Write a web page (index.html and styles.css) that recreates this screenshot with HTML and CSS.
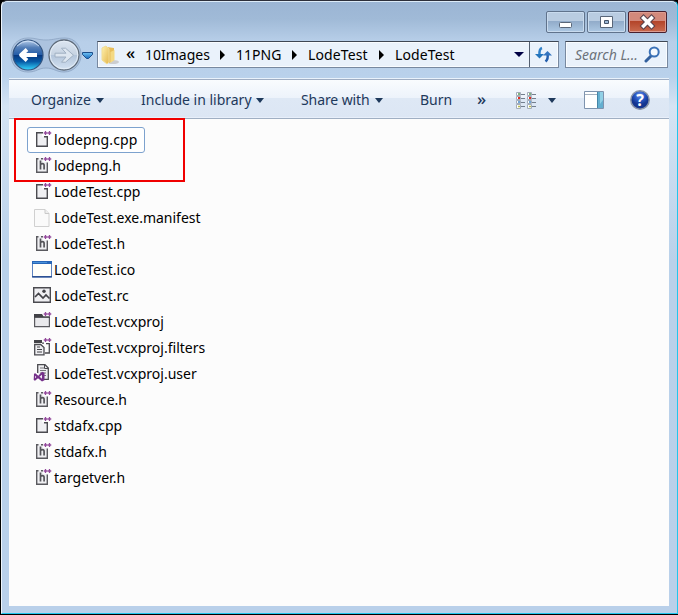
FILE: index.html
```html
<!DOCTYPE html>
<html lang="en">
<head>
<meta charset="utf-8">
<title>LodeTest</title>
<link rel="stylesheet" href="styles.css">
</head>
<body>
<svg class="defs" width="0" height="0" aria-hidden="true">
  <defs>
    <symbol id="plus" viewBox="0 0 8 4"><path d="M0 2h4M2 0v4M4.200 2h3.800M6 0v4" fill="none" stroke="#93499b" stroke-width="1.300"/></symbol>
    <symbol id="cpp" viewBox="0 0 20 20">
      <path d="M4.700 2.700H10V6.500H15.300V16.300H4.700Z" fill="#efeff2"/>
      <path d="M11 2.700H4.700V16.300H15.300V6.700H12" fill="none" stroke="#4b4b50" stroke-width="1.400"/>
      <use href="#plus" x="11.500" y="1" width="8" height="4"/>
    </symbol>
    <symbol id="h" viewBox="0 0 20 20">
      <path d="M4 2h7v4h5v11H4Z" fill="#efeff2"/>
      <path d="M6.500 2.700H4.700V16.300H15.300V6.500M9 2.700h2" fill="none" stroke="#5a5a5f" stroke-width="1.400"/>
      <path d="M8.500 4.500v9M8.500 8.500q.8-.9 2-.9 1.600 0 1.600 2v3.900" fill="none" stroke="#55555a" stroke-width="1.700"/>
      <use href="#plus" x="11.500" y="1" width="8" height="4"/>
    </symbol>
    <symbol id="blank" viewBox="0 0 20 20">
      <path d="M2.500 1.500H13l4 4V18.500H2.500Z" fill="#fafafa" stroke="#d0d0d0"/>
      <path d="M13 1.500V5.500h4" fill="#eee" stroke="#c9c9c9"/>
    </symbol>
    <symbol id="ico" viewBox="0 0 20 20">
      <path d="M.5 2h19v15H.5Z" fill="#fffffa" stroke="#5d83c0"/>
      <path d="M0 1h20v3H0Z" fill="#2867b8"/><path d="M1 2h14v1H1Z" fill="#4b93da"/><path d="M0 16h20v1.500H0Z" fill="#2d5193"/>
    </symbol>
    <symbol id="rc" viewBox="0 0 20 20">
      <path d="M1.700 1.700h16.600v14.600H1.700Z" fill="#efeff2" stroke="#4b4b50" stroke-width="1.400"/>
      <path d="M3 11l3.500-3.500 4.500 4.500 3-3 3.500 3.500" fill="none" stroke="#424247" stroke-width="1.700"/><circle cx="12" cy="5.200" r="1.700" fill="#424247"/>
    </symbol>
    <symbol id="proj" viewBox="0 0 20 20">
      <path d="M2.600 5h14.800v9.700H2.600Z" fill="#e9e9ec" stroke="#5a5a5f" stroke-width="1.200"/>
      <path d="M2 2h8L11.500 4.500h6.500v1.300H2Z" fill="#424247"/><use href="#plus" x="11.500" y="0" width="8" height="4"/>
    </symbol>
    <symbol id="filters" viewBox="0 0 20 20">
      <path d="M2 2h8v3H2Z" fill="#424247"/><path d="M10 5.200h2M14 5.700h3.300V15H13" fill="none" stroke="#4b4b50" stroke-width="1.300"/>
      <path d="M2.700 6.500h6l3.300 3V16.800H2.700Z" fill="#efeff2" stroke="#4b4b50" stroke-width="1.300"/>
      <path d="M5 9h3M5 11.500h5M5 14h5" stroke="#424247"/><use href="#plus" x="11.500" y="0" width="8" height="4"/>
    </symbol>
    <symbol id="user" viewBox="0 0 20 20">
      <path d="M5.700 9V.700H13L16.300 4V15.300H10" fill="#efeff2" stroke="#4b4b50" stroke-width="1.300"/>
      <path d="M8 4h4M8 6.500h6M8 9h6M12 11.500h2" stroke="#77777b"/><path d="M12.500 .5V4.500h4" fill="none" stroke="#4b4b50"/>
      <path d="M2 9.800L3.300 9.300l3 2.500L10 7.800l2.500 1V16.300l-2.500 1.200L6 14.300l-3 2.500-1.300-.7Z" fill="#75308a"/><path d="M3 11.800v2.500l1.300-1.300ZM10 10.800v4l-2.500-2Z" fill="#f1e9f5"/>
    </symbol>
    <linearGradient id="orb" x2="0" y2="1"><stop stop-color="#b9d0ed"/><stop offset=".25" stop-color="#547fb8"/><stop offset=".49" stop-color="#245ca7"/><stop offset=".5" stop-color="#07357d"/><stop offset=".72" stop-color="#075aa6"/><stop offset="1" stop-color="#36d9ff"/></linearGradient>
    <linearGradient id="dull" x2="0" y2="1"><stop stop-color="#dce6f1"/><stop offset=".49" stop-color="#c6d3e2"/><stop offset=".5" stop-color="#b2c4da"/><stop offset="1" stop-color="#d5e3f2"/></linearGradient>
    <linearGradient id="blue" x2="0" y2="1"><stop stop-color="#74c6f6"/><stop offset="1" stop-color="#1668ba"/></linearGradient>
    <linearGradient id="gold" x2="1" y2="1"><stop stop-color="#fff1ac"/><stop offset="1" stop-color="#e3b64f"/></linearGradient>
    <radialGradient id="help" cy=".25"><stop stop-color="#6c91e4"/><stop offset=".55" stop-color="#2858c4"/><stop offset="1" stop-color="#14358f"/></radialGradient>
  </defs>
</svg>
<div class="window">
  <header class="titlebar">
    <button class="ctl" aria-label="Minimize"><svg width="39" height="22"><rect x="13.500" y="11.500" width="12" height="5" rx="1" fill="#fff" stroke="#596678"/></svg></button>
    <button class="ctl" aria-label="Maximize"><svg width="39" height="22"><path d="M13.500 5.500h12v11h-12Z" fill="#fff" stroke="#596678"/><path d="M17.500 9.500h4v3h-4Z" fill="#9db9d6" stroke="#465469"/></svg></button>
    <button class="ctl close" aria-label="Close"><svg width="39" height="22"><path d="M15.500 7l8 8M23.500 7l-8 8" stroke="#57414b" stroke-width="5.500" stroke-linecap="square"/><path d="M15.500 7l8 8M23.500 7l-8 8" stroke="#fff" stroke-width="3.500" stroke-linecap="square"/></svg></button>
  </header>
  <nav class="navrow">
    <svg class="orbs" width="87" height="37" viewBox="0 0 87 37">
      <path d="M19 2C27 2 29 4 37 4S47 2 56 2C66 2 72 10 72 19S65 36 55 36C47 36 45 32 37 32S28 36 19 36C9 36 2 29 2 19S9 2 19 2Z" fill="#acc3df" stroke="#93abc9"/>
      <circle cx="19" cy="19" r="15" fill="url(#orb)" stroke="#34547f" stroke-width="1.200"/><path d="M8 10Q19 0 30 10" fill="none" stroke="#e2efff" stroke-opacity=".7"/>
      <path d="M28 19H12.500M18 13.500L12 19l6 5.500" fill="none" stroke="#fff" stroke-width="3.800" stroke-linejoin="round"/>
      <circle cx="55" cy="19" r="15" fill="url(#dull)" stroke="#5f6b79" stroke-width="1.300"/><circle cx="55" cy="19" r="13.800" fill="none" stroke="#e5eef7"/>
      <path d="M46 17.200h11l-4.500-5h4l8 7-8 7h-4L57 21H46Z" fill="#dde6f0" stroke="#a0b0c2"/>
      <path d="M73.500 16.500h10v2l-4 4h-2l-4-4Z" fill="url(#blue)" stroke="#1c4e8c"/>
    </svg>
    <div class="address">
      <svg class="folder" width="20" height="22" viewBox="0 0 20 22"><ellipse cx="13" cy="18" rx="6" ry="2" fill="#cbcdd0"/><path d="M7 3l7 1v12l-5 3-2-2Z" fill="#e8bd5a"/><path d="M2 4l4-2 3 3v13l-2 2-5-4Z" fill="url(#gold)" stroke="#f0dc94"/><path d="M10.500 8l4-2v10l-4 3Z" fill="#f4d983"/></svg>
      <span class="crumb chev">«</span>
      <span class="crumb first">10Images</span><i class="arr"></i>
      <span class="crumb second">11PNG</span><i class="arr"></i>
      <span class="crumb third">LodeTest</span><i class="arr"></i>
      <span class="crumb fourth">LodeTest</span>
      <i class="caret dark"></i>
      <span class="refresh"><svg width="18" height="18" viewBox="0 0 18 18"><path d="M7 2Q4 3 4.500 9" fill="none" stroke="#3181c8" stroke-width="2.500"/><path d="M0 8h9L4.500 12.500Z" fill="#2475bc"/><path d="M12.500 8Q13.500 13 10.500 15.500" fill="none" stroke="#245eac" stroke-width="2.500"/><path d="M8 9.500L12.500 5 17 9.500Z" fill="#3374bf"/></svg></span>
    </div>
    <div class="search"><span>Search L...</span><svg width="17" height="17" viewBox="0 0 17 17"><path d="M7 10L2 15" stroke="#32609e" stroke-width="3" stroke-linecap="round"/><circle cx="10.200" cy="6" r="4.500" fill="#f5faff" stroke="#3b72b7" stroke-width="2"/></svg></div>
  </nav>
  <div class="toolbar">
    <span class="cmd organize">Organize</span><i class="caret"></i>
    <span class="cmd include">Include in library</span><i class="caret"></i>
    <span class="cmd share">Share with</span><i class="caret"></i>
    <span class="cmd burn">Burn</span>
    <span class="cmd more">»</span>
    <svg class="views" width="20" height="17" viewBox="0 0 20 17">
      <g id="vcol"><path d="M.5.500h4v3h-4zM.5 4.500h4v3h-4zM.5 8.500h4v3h-4zM.5 12.500h4v4h-4z" fill="#fff" stroke="#a4adba"/><path d="M5 2.500h4M5 6.500h4M5 10.500h4M5 14.500h4" stroke="#747f8e"/><path d="M2 2h2" stroke="#5a9b56" stroke-width="1.500"/><path d="M2 6h2" stroke="#e32d22" stroke-width="2"/><path d="M2 10h2" stroke="#4188cb" stroke-width="1.500"/><path d="M2 14.500h2" stroke="#b9bb50" stroke-width="1.500"/></g><use href="#vcol" x="11"/>
    </svg>
    <i class="caret viewcaret"></i>
    <svg class="pane" width="20" height="18"><path d="M.5.500h19v17H.5Z" fill="#fff" stroke="#7e93ae"/><path d="M1 3.500h12" stroke="#a5b1bf"/><path d="M13 1h6v16h-6Z" fill="#64afd0"/><path d="M13.500 1v16" stroke="#4686a7"/><path d="M16 1h3v8l-3 4Z" fill="#91d0e6"/></svg>
    <div class="help"><svg width="22" height="22"><circle cx="11" cy="11" r="9.200" fill="url(#help)" stroke="#8994a6" stroke-width="1.500"/></svg><b>?</b></div>
  </div>
  <main class="files">
    <div class="file selected"><svg><use href="#cpp"/></svg><span>lodepng.cpp</span></div>
    <div class="file"><svg><use href="#h"/></svg><span>lodepng.h</span></div>
    <div class="file"><svg><use href="#cpp"/></svg><span>LodeTest.cpp</span></div>
    <div class="file"><svg><use href="#blank"/></svg><span>LodeTest.exe.manifest</span></div>
    <div class="file"><svg><use href="#h"/></svg><span>LodeTest.h</span></div>
    <div class="file"><svg><use href="#ico"/></svg><span>LodeTest.ico</span></div>
    <div class="file"><svg><use href="#rc"/></svg><span>LodeTest.rc</span></div>
    <div class="file"><svg><use href="#proj"/></svg><span>LodeTest.vcxproj</span></div>
    <div class="file"><svg><use href="#filters"/></svg><span>LodeTest.vcxproj.filters</span></div>
    <div class="file"><svg><use href="#user"/></svg><span>LodeTest.vcxproj.user</span></div>
    <div class="file"><svg><use href="#h"/></svg><span>Resource.h</span></div>
    <div class="file"><svg><use href="#cpp"/></svg><span>stdafx.cpp</span></div>
    <div class="file"><svg><use href="#h"/></svg><span>stdafx.h</span></div>
    <div class="file"><svg><use href="#h"/></svg><span>targetver.h</span></div>
  </main>
  <div class="highlight"></div>
</div>
</body>
</html>
```
FILE: styles.css
```css
* { box-sizing: border-box; }
body { margin: 0; background: #000; font: 14px/20px "Noto Sans", "Open Sans", sans-serif; color: #000; overflow: hidden; }
.defs { position: absolute; }
.window {
  position: relative; width: 677px; height: 614px; margin-left: 1px; padding: 0 8px 7px 7px;
  display: flex; flex-direction: column; border: 1px solid #20c6ed; border-top-color: #2c2f3a; border-left-color: #eef5fc;
  border-radius: 6px 6px 0 0; box-shadow: inset 0 1px #dcebf8;
  background: linear-gradient(#9bb5d4 0, #a0bad7 18px, #b8cfe9 41px, #b9d1eb 75px, #d5e4f4 105px, #b9d1ea 260px, #b9d0ea 100%);
}
.titlebar { height: 35px; flex: none; display: flex; justify-content: flex-end; gap: 2px; padding: 10px 2px 0; }
.ctl { width: 39px; height: 22px; padding: 0; border: 1px solid #60738c; border-radius: 2px; box-shadow: inset 0 0 0 1px #c9dbee; background: linear-gradient(#b9cce1 0 45%, #91abc9 46%, #adc8e3); }
.ctl svg { display: block; margin: -1px; }
.close { border-color: #48202e; box-shadow: inset 0 0 0 1px #dc9c91; background: linear-gradient(#d3897b 0 45%, #b34429 46%, #c96b50); }
.navrow { height: 42px; flex: none; display: flex; align-items: flex-start; }
.orbs { flex: none; margin-right: 1px; }
.address, .search { height: 27px; margin-top: 5px; border: 1px solid #7889a0; border-top-color: #3f4754; background: #eaf2fb; box-shadow: inset 0 0 0 1px #f9fcff; }
.address { width: 462px; display: flex; align-items: center; }
.folder { margin-left: 2px; flex: none; }
.crumb { flex: none; white-space: nowrap; }
.chev { width: 19px; margin-left: 6px; margin-top: -3px; font-size: 17px; font-weight: 500; line-height: 18px; }
.first { width: 75px; } .second { width: 56px; } .third { width: 71px; } .fourth { width: 119px; }
.third, .fourth { letter-spacing: .12px; }
.arr { width: 5px; height: 0; flex: none; border: 5px solid transparent; border-left: 5px solid #000; border-right: 0; }
.arr + .crumb { margin-left: 11px; }
.caret { flex: none; border: 4px solid transparent; border-top: 4px solid #1e395b; border-bottom: 0; }
.caret.dark { border-width: 5px 5px 0; border-top-color: #000044; }
.refresh { width: 29px; height: 25px; flex: none; margin-left: auto; border-left: 1px solid #535f70; display: grid; place-items: center; }
.search { width: 103px; margin-left: 6px; display: flex; align-items: center; justify-content: space-between; padding: 0 6px 0 9px; font-style: italic; color: #6d737a; }
.toolbar { height: 41px; flex: none; display: flex; align-items: center; padding: 3px 0 0 22px; color: #1e395b; border-top: 1px solid #e9f2fb; border-bottom: 1px solid #a0afc3; box-shadow: inset 0 1px #a0aec3, inset 0 -1px #e8effa; background: linear-gradient(#fafcfe 0, #edf3fb 48%, #dee8f5 50%, #dce6f4); }
.cmd { flex: none; white-space: nowrap; }
.organize { width: 65px; }
.include { width: 115px; }
.share { width: 74px; letter-spacing: -.1px; }
.burn { width: 57px; }
.more { width: 39px; font-size: 17px; font-weight: 500; line-height: 20px; margin-top: -3px; }
.toolbar .caret { border-width: 5px 4px 0; }
.caret + .include, .caret + .share, .caret + .burn { margin-left: 37px; }
.views { flex: none; }
.viewcaret { margin-left: 12px; }
.pane { margin-left: 28px; flex: none; }
.help { position: relative; width: 22px; height: 22px; margin-left: 25px; }
.help svg { display: block; }
.help b { position: absolute; inset: 0; text-align: center; font-size: 16px; line-height: 22px; color: #fff; }
.files { flex: 1; background: #fcfcfc; padding: 8px 0 0 18px; }
.file { width: max-content; height: 26px; display: flex; align-items: center; gap: 2px; border: 1px solid transparent; padding: 0 6px 0 4px; white-space: nowrap; }
.file svg { width: 20px; height: 20px; flex: none; }
.selected { width: 118px; border-color: #7da2ce; border-radius: 3px; background: #fff; letter-spacing: .12px; }
.highlight { position: absolute; left: 12px; top: 117px; width: 171px; height: 64px; border: 2px solid #f00000; }
```
